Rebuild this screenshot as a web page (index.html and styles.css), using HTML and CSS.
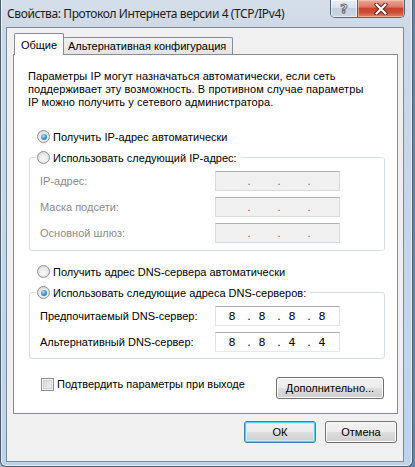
FILE: index.html
```html
<!DOCTYPE html>
<html lang="ru">
<head>
<meta charset="utf-8">
<title>Свойства: Протокол Интернета версии 4 (TCP/IPv4)</title>
<link rel="stylesheet" href="styles.css">
</head>
<body>
<div class="window">
  <div class="titlebar">
    <span class="title">Свойства: Протокол Интернета версии 4 (TCP/IPv4)</span>
    <div class="caption-btns">
      <span class="cbtn help">?</span>
      <span class="cbtn close">
        <svg width="14" height="12" viewBox="0 0 14 12"><path d="M2.5 1.5 L11.5 10.5 M11.5 1.5 L2.5 10.5" stroke="#5b241a" stroke-width="4.2" stroke-linecap="round"/><path d="M2.5 1.5 L11.5 10.5 M11.5 1.5 L2.5 10.5" stroke="#ffffff" stroke-width="2.2" stroke-linecap="round"/></svg>
      </span>
    </div>
  </div>
  <div class="client">
    <div class="tabs">
      <span class="tab active">Общие</span>
      <span class="tab">Альтернативная конфигурация</span>
    </div>
    <div class="panel">
      <p class="desc">Параметры IP могут назначаться автоматически, если сеть<br>поддерживает эту возможность. В противном случае параметры<br>IP можно получить у сетевого администратора.</p>

      <div class="option first"><span class="radio checked"></span><span>Получить IP-адрес автоматически</span></div>

      <fieldset class="group">
        <legend class="option"><span class="radio"></span><span>Использовать следующий IP-адрес:</span></legend>
        <div class="fields">
          <div class="field disabled"><span class="flabel">IP-адрес:</span><span class="ipbox"><span class="seg"></span><span class="dot">.</span><span class="seg"></span><span class="dot">.</span><span class="seg"></span><span class="dot">.</span><span class="seg"></span></span></div>
          <div class="field disabled"><span class="flabel">Маска подсети:</span><span class="ipbox"><span class="seg"></span><span class="dot">.</span><span class="seg"></span><span class="dot">.</span><span class="seg"></span><span class="dot">.</span><span class="seg"></span></span></div>
          <div class="field disabled"><span class="flabel">Основной шлюз:</span><span class="ipbox"><span class="seg"></span><span class="dot">.</span><span class="seg"></span><span class="dot">.</span><span class="seg"></span><span class="dot">.</span><span class="seg"></span></span></div>
        </div>
      </fieldset>

      <div class="option dns-auto"><span class="radio"></span><span>Получить адрес DNS-сервера автоматически</span></div>

      <fieldset class="group dns">
        <legend class="option"><span class="radio checked"></span><span>Использовать следующие адреса DNS-серверов:</span></legend>
        <div class="fields">
          <div class="field"><span class="flabel">Предпочитаемый DNS-сервер:</span><span class="ipbox"><span class="seg">8</span><span class="dot">.</span><span class="seg">8</span><span class="dot">.</span><span class="seg">8</span><span class="dot">.</span><span class="seg">8</span></span></div>
          <div class="field"><span class="flabel">Альтернативный DNS-сервер:</span><span class="ipbox"><span class="seg">8</span><span class="dot">.</span><span class="seg">8</span><span class="dot">.</span><span class="seg">4</span><span class="dot">.</span><span class="seg">4</span></span></div>
        </div>
      </fieldset>

      <div class="bottom-row">
        <label class="check"><span class="checkbox"></span><span>Подтвердить параметры при выходе</span></label>
        <button class="btn advanced">Дополнительно...</button>
      </div>
    </div>
    <div class="actions">
      <button class="btn default">ОК</button>
      <button class="btn">Отмена</button>
    </div>
  </div>
</div>
</body>
</html>
```
FILE: styles.css
```css
* { box-sizing: border-box; }
html, body { margin: 0; }
body {
  width: 415px;
  height: 467px;
  overflow: hidden;
  background: linear-gradient(90deg, #9fb9d6, #5f86b3);
  font-family: "Liberation Sans", Arial, sans-serif;
  font-size: 11px;
  color: #000;
}
.window {
  width: 413px;
  height: 467px;
  border: 1px solid #4d5c6e;
  border-top: none;
  border-radius: 0 0 6px 6px;
  background: linear-gradient(180deg, #d6dfe9 0, #cdd9e6 30px, #c3d5e9 60%, #bcd3ec 100%);
  padding: 0 8px 4px 5px;
  display: flex;
  flex-direction: column;
  box-shadow: inset 1px 0 0 rgba(255,255,255,0.6), inset -1px 0 0 rgba(255,255,255,0.6), inset 0 -1px 0 rgba(255,255,255,0.6);
}
.titlebar {
  height: 27px;
  display: flex;
  align-items: flex-start;
}
.title {
  margin-left: 1px;
  padding-top: 6px;
  line-height: 16px;
  font-family: "Noto Sans", "Open Sans", sans-serif;
  font-size: 12px;
  letter-spacing: -0.4px;
  color: #1b1b1b;
}
.caption-btns {
  margin-left: auto;
  margin-right: -1px;
  display: flex;
  height: 18px;
  border: 1px solid #56667a;
  border-top: none;
  border-radius: 0 0 5px 5px;
  overflow: hidden;
}
.cbtn {
  height: 17px;
  display: flex;
  align-items: center;
  justify-content: center;
}
.help {
  width: 27px;
  border-right: 1px solid #56667a;
  background: linear-gradient(180deg, #e9eef4 0, #d8e1eb 45%, #c3cfdd 50%, #ccd8e5 100%);
  box-shadow: inset 0 0 0 1px rgba(255,255,255,0.55);
  font-family: "DejaVu Sans", sans-serif;
  font-weight: bold;
  font-size: 13px;
  color: #e9eef4;
  -webkit-text-stroke: 1px #5f6b7a;
}
.close {
  width: 46px;
  background: linear-gradient(180deg, #e9a898 0, #dc7a65 40%, #c8432c 50%, #cf5038 75%, #e08a6e 100%);
  box-shadow: inset 0 0 0 1px rgba(255,220,210,0.45);
}
.client {
  height: 435px;
  border: 1px solid #7d8a99;
  background: #f0f0f0;
  display: flex;
  flex-direction: column;
}
.tabs {
  height: 27px;
  padding: 5px 0 0 7px;
  display: flex;
  align-items: flex-end;
  position: relative;
  z-index: 2;
}
.tab {
  height: 17px;
  margin-bottom: 1px;
  margin-left: -1px;
  padding: 2px 4px 0 4px;
  border: 1px solid #898c95;
  border-bottom: none;
  border-radius: 2px 2px 0 0;
  background: linear-gradient(180deg, #f2f2f2, #e3e3e3);
  line-height: 13px;
  white-space: nowrap;
}
.tab.active {
  width: 50px;
  height: 22px;
  margin-bottom: 0;
  margin-left: 0;
  padding: 5px 0 0 0;
  text-align: center;
  background: #fff;
}
.tab:not(.active) { width: 170px; }
.panel {
  margin: -1px 0 0 6px;
  width: 385px;
  height: 360px;
  border: 1px solid #898c95;
  background: #fff;
  position: relative;
  z-index: 1;
}
.desc {
  margin: 15px 0 0 14px;
  line-height: 13px;
  letter-spacing: 0.08px;
}
.option {
  display: flex;
  align-items: center;
  height: 15px;
  white-space: nowrap;
}
.option.first { margin: 20px 0 0 23px; }
.option.dns-auto { margin: 13px 0 0 23px; }
.radio {
  width: 13px;
  height: 13px;
  margin-right: 3px;
  border-radius: 50%;
  border: 1px solid #8e8f8f;
  background: radial-gradient(circle at 50% 60%, #fbfbfb 0, #e6e6e6 55%, #cfcfcf 100%);
  position: relative;
  flex: none;
}
.radio.checked::after {
  content: "";
  position: absolute;
  left: 2.5px;
  top: 2.5px;
  width: 6px;
  height: 6px;
  border-radius: 50%;
  background: radial-gradient(circle at 40% 35%, #b9e6fb 0, #3f9ad8 45%, #195c9c 100%);
}
.group {
  margin: 6px 12px 0 15px;
  padding: 0;
  border: 1px solid #d5dfe5;
  border-radius: 3px;
  min-width: 0;
}
.group legend {
  margin-left: 6px;
  padding: 0 4px 0 1px;
}
.fields {
  padding: 6px 0 7px 10px;
  display: flex;
  flex-direction: column;
  gap: 6px;
}
.group.dns .fields { padding-bottom: 6px; }
.field {
  display: flex;
  align-items: center;
  height: 20px;
}
.flabel {
  width: 175px;
  white-space: nowrap;
}
.field.disabled .flabel { color: #8c8c8c; }
.ipbox {
  width: 125px;
  height: 20px;
  border: 1px solid #e2e3ea;
  border-top-color: #abadb3;
  border-bottom-color: #e3e9ef;
  background: #fff;
  display: flex;
  align-items: center;
  padding-left: 6px;
  font-family: "DejaVu Sans", sans-serif;
  font-size: 11px;
}
.field.disabled .ipbox {
  background: #f0f0f0;
  border-color: #d6d9de;
  border-top-color: #adb2b5;
  color: #6d6d7a;
}
.seg {
  width: 20px;
  text-align: center;
}
.dot {
  width: 10px;
  padding-left: 4px;
  text-align: center;
}
.bottom-row {
  margin: 18px 13px 0 27px;
  display: flex;
  justify-content: space-between;
  align-items: flex-start;
}
.check {
  display: flex;
  align-items: center;
  height: 14px;
}
.checkbox {
  width: 13px;
  height: 13px;
  margin-right: 3px;
  border: 1px solid #8e8f8f;
  background: linear-gradient(135deg, #d2d2d2, #f5f5f5);
  box-shadow: inset 0 0 0 1px #f4f4f4, inset 0 0 0 2px #d3d3d3;
}
.btn {
  height: 22px;
  border: 1px solid #707070;
  border-radius: 3px;
  background: linear-gradient(180deg, #f2f2f2 0, #ebebeb 49%, #dddddd 50%, #cfcfcf 100%);
  box-shadow: inset 0 0 0 1px #fcfcfc;
  font-family: "Liberation Sans", Arial, sans-serif;
  font-size: 11px;
  color: #000;
  padding: 0;
}
.advanced { width: 108px; }
.actions {
  margin-top: 7px;
  padding-right: 6px;
  display: flex;
  justify-content: flex-end;
  gap: 9px;
}
.actions .btn { width: 72px; }
.btn.default {
  border-color: #3c7fb1;
  box-shadow: inset 0 0 0 1px #58d0f3, inset 0 0 0 2px #c9eefc;
}
```
